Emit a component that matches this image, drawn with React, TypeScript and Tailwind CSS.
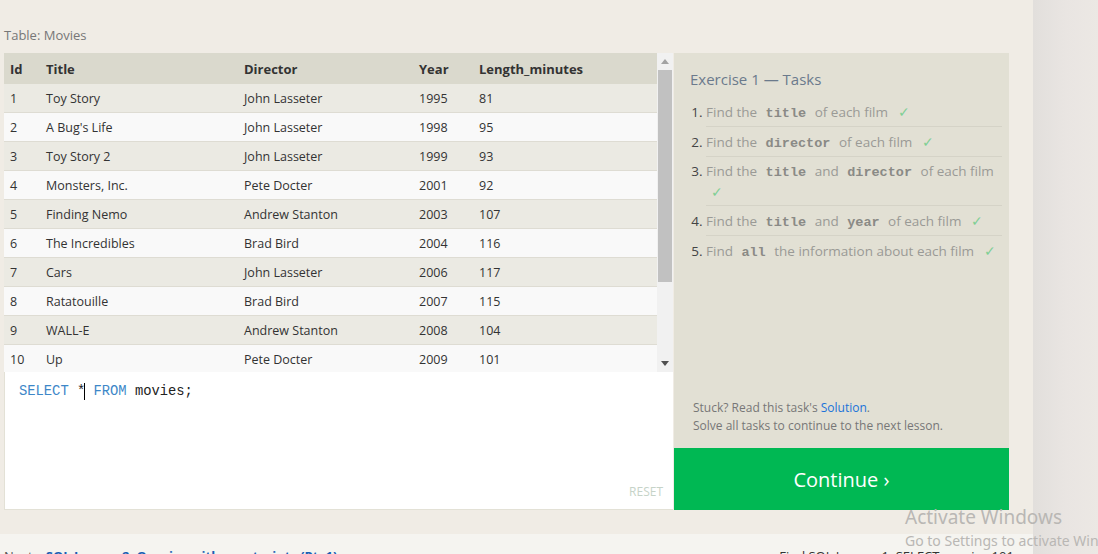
import React from "react";

const movies = [
  [1, "Toy Story", "John Lasseter", 1995, 81],
  [2, "A Bug's Life", "John Lasseter", 1998, 95],
  [3, "Toy Story 2", "John Lasseter", 1999, 93],
  [4, "Monsters, Inc.", "Pete Docter", 2001, 92],
  [5, "Finding Nemo", "Andrew Stanton", 2003, 107],
  [6, "The Incredibles", "Brad Bird", 2004, 116],
  [7, "Cars", "John Lasseter", 2006, 117],
  [8, "Ratatouille", "Brad Bird", 2007, 115],
  [9, "WALL-E", "Andrew Stanton", 2008, 104],
  [10, "Up", "Pete Docter", 2009, 101],
];

const sans = { fontFamily: '"Open Sans", "Noto Sans", sans-serif' };

function Code({ children }: { children: React.ReactNode }) {
  return (
    <span className="px-[5px] font-bold text-[#8a8a86] text-[13.5px] leading-none" style={{ fontFamily: '"Liberation Mono", monospace' }}>
      {children}
    </span>
  );
}

function Check({ wrap }: { wrap?: boolean }) {
  return <span className={(wrap ? "ml-[5px]" : "ml-[10px]") + " text-[#7fcf95] text-[14px] leading-none"}>✓</span>;
}

export default function App() {
  return (
    <div className="flex h-[554px] w-[1098px] overflow-hidden relative" style={sans}>
      <div className="w-[1033px] shrink-0 flex flex-col bg-[#f0ece5]">
        <div className="h-[534px] shrink-0 flex flex-col pl-[4px]">
          <div className="h-[53px] flex items-end pb-[9px] text-[13px] text-[#777] leading-[18px]">Table: Movies</div>
          <div className="flex">
            {/* left column */}
            <div className="w-[669px] flex flex-col">
              <div className="h-[319px] flex overflow-hidden">
                <div className="flex-1 flex flex-col">
                  <div className="h-[31px] shrink-0 bg-[#dad9cd] grid grid-cols-[36px_198px_175px_60px_1fr] pl-[6px] pt-[2px] items-center text-[13px] font-bold text-[#333]">
                    <div>Id</div>
                    <div>Title</div>
                    <div>Director</div>
                    <div>Year</div>
                    <div>Length_minutes</div>
                  </div>
                  {movies.map((m, i) => (
                    <div
                      key={i}
                      className={
                        "h-[29px] shrink-0 grid grid-cols-[36px_198px_175px_60px_1fr] pl-[6px] pt-[2px] items-center text-[12.5px] text-[#333] border-b border-[#dedcd3] " +
                        (i % 2 === 0 ? "bg-[#ebeae3]" : "bg-[#f9f9f9]")
                      }
                    >
                      <div>{m[0]}</div>
                      <div>{m[1]}</div>
                      <div>{m[2]}</div>
                      <div>{m[3]}</div>
                      <div>{m[4]}</div>
                    </div>
                  ))}
                </div>
                {/* scrollbar */}
                <div className="w-[16px] bg-[#f1f1f1] flex flex-col items-center">
                  <div className="h-[17px] flex items-center justify-center">
                    <svg width="8" height="5" viewBox="0 0 8 5"><path d="M0 5 L4 0 L8 5 Z" fill="#a3a3a3" /></svg>
                  </div>
                  <div className="w-[14px] h-[212px] bg-[#c1c1c1]" />
                  <div className="flex-1" />
                  <div className="h-[17px] flex items-center justify-center">
                    <svg width="8" height="5" viewBox="0 0 8 5"><path d="M0 0 L8 0 L4 5 Z" fill="#505050" /></svg>
                  </div>
                </div>
              </div>
              {/* editor */}
              <div className="h-[138px] bg-white border-l border-b border-[#e3e1d6] flex flex-col relative">
                <div className="pt-[11px] pl-[14px] text-[13.8px] leading-[18px] text-[#222]" style={{ fontFamily: '"Liberation Mono", monospace' }}>
                  <span className="text-[#3d87c8]">SELECT</span> *<span className="inline-block w-[1px] h-[17px] bg-black align-middle -ml-[1px]" />{" "}
                  <span className="text-[#3d87c8]">FROM</span> movies;
                </div>
                <div className="mt-auto self-end pr-[10px] pb-[8px] text-[12px] text-[#c6d3c8]">RESET</div>
              </div>
            </div>
            {/* right panel */}
            <div className="w-[335px] ml-[1px] flex flex-col">
              <div className="h-[395px] bg-[#e2e0d4] flex flex-col pl-[16px] pr-[7px]">
                <div className="pt-[16px] text-[15px] leading-[20px] text-[#6b7a8c]">Exercise 1 — Tasks</div>
                <ol className="mt-[8px] list-decimal pl-[16px] text-[13.5px] text-[#9a9a96] marker:text-[#444]">
                  <li className="h-[30px] pt-[5px] leading-[20px] border-b border-[#d5d3c7] whitespace-nowrap">
                    Find the <Code>title</Code> of each film<Check />
                  </li>
                  <li className="h-[30px] pt-[5px] leading-[20px] border-b border-[#d5d3c7] whitespace-nowrap">
                    Find the <Code>director</Code> of each film<Check />
                  </li>
                  <li className="h-[49px] pt-[4px] leading-[21px] border-b border-[#d5d3c7]">
                    <span className="whitespace-nowrap">Find the <Code>title</Code> and <Code>director</Code> of each film</span>
                    <br />
                    <Check wrap />
                  </li>
                  <li className="h-[30px] pt-[5px] leading-[20px] border-b border-[#d5d3c7] whitespace-nowrap">
                    Find the <Code>title</Code> and <Code>year</Code> of each film<Check />
                  </li>
                  <li className="h-[30px] pt-[5px] leading-[20px] whitespace-nowrap">
                    Find <Code>all</Code> the information about each film<Check />
                  </li>
                </ol>
                <div className="mt-auto pl-[3px] pb-[13px] text-[12px] leading-[18px] text-[#777]">
                  <div>
                    Stuck? Read this task's <span className="text-[#1a73d9]">Solution</span>.
                  </div>
                  <div>Solve all tasks to continue to the next lesson.</div>
                </div>
              </div>
              <div className="h-[62px] bg-[#00b853] flex items-center justify-center pt-[2px] text-white text-[20px]">
                Continue ›
              </div>
            </div>
          </div>
        </div>
        <div className="flex-1 bg-[#f5f4f0] flex pt-[13px] text-[13px] leading-[18px] whitespace-nowrap">
          <div className="pl-[4px] w-[793px] text-[#555]">
            Next – <span className="text-[#1a5fb4] font-bold">SQL Lesson 2: Queries with constraints (Pt. 1)</span>
          </div>
          <div className="text-[#333]">Find SQL Lesson 1: SELECT queries 101 on</div>
        </div>
      </div>
      <div className="flex-1 bg-gradient-to-r from-[#e2dfdc] via-[#e9e5e2] to-[#ece8e4]" />
      {/* Windows activation watermark overlay */}
      <div className="absolute left-[905px] top-[505px] text-[#b9b7b4] pointer-events-none whitespace-nowrap" style={{ fontFamily: '"Noto Sans", sans-serif' }}>
        <div className="text-[19px] leading-[24px]">Activate Windows</div>
        <div className="text-[14px] leading-[20px] pt-[2px]">Go to Settings to activate Windows.</div>
      </div>
    </div>
  );
}
